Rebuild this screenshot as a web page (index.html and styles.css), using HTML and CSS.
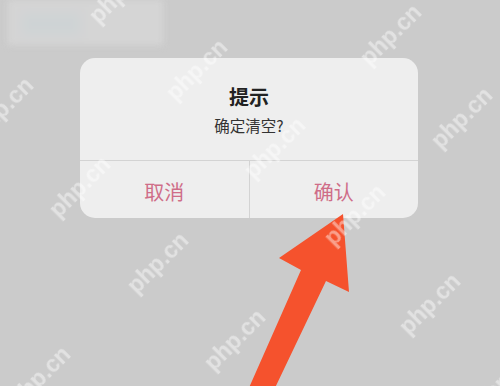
FILE: index.html
```html
<!DOCTYPE html>
<html lang="zh-CN">
<head>
<meta charset="utf-8">
<title>提示</title>
<link rel="stylesheet" href="styles.css">
</head>
<body>
<div class="page">
  <div class="blur-card"><div class="blur-blob"></div></div>
</div>

<div class="overlay">
  <div class="dialog">
    <div class="dialog-body">
      <div class="dialog-title">提示</div>
      <div class="dialog-msg">确定清空?</div>
    </div>
    <div class="dialog-actions">
      <div class="btn">取消</div>
      <div class="btn btn-right">确认</div>
    </div>
  </div>
</div>

<svg class="arrow" width="500" height="386" viewBox="0 0 500 386">
  <polygon points="343,214 349,292 326,281 274,390 248,390 301,270 279,258" fill="#f5522d"/>
</svg>

<div class="watermarks">
  <span class="wm" style="left:120px;top:-7px">php.cn</span>
  <span class="wm" style="left:197px;top:70px">php.cn</span>
  <span class="wm" style="left:275px;top:148px">php.cn</span>
  <span class="wm" style="left:355px;top:215px">php.cn</span>
  <span class="wm" style="left:430px;top:304px">php.cn</span>
  <span class="wm" style="left:505px;top:380px">php.cn</span>
  <span class="wm" style="left:3px;top:108px">php.cn</span>
  <span class="wm" style="left:80px;top:187px">php.cn</span>
  <span class="wm" style="left:158px;top:263px">php.cn</span>
  <span class="wm" style="left:235px;top:340px">php.cn</span>
  <span class="wm" style="left:312px;top:417px">php.cn</span>
  <span class="wm" style="left:40px;top:377px">php.cn</span>
  <span class="wm" style="left:391px;top:35px">php.cn</span>
  <span class="wm" style="left:462px;top:118px">php.cn</span>
</div>
</body>
</html>
```

FILE: styles.css
```css
html, body {
  margin: 0;
  padding: 0;
}
body {
  width: 500px;
  height: 386px;
  overflow: hidden;
  background: #cbcbcb;
  font-family: "Noto Sans CJK SC", "Noto Sans", sans-serif;
  position: relative;
}
.page {
  padding-left: 8px;
}
.blur-card {
  width: 155px;
  height: 45px;
  background: #d5d5d5;
  filter: blur(3px);
  padding: 13px 0 0 14px;
  box-sizing: border-box;
}
.blur-blob {
  width: 58px;
  height: 22px;
  background: #ced3d5;
  filter: blur(5px);
}
.overlay {
  position: absolute;
  left: 0;
  top: 0;
  width: 500px;
  height: 386px;
  padding: 58px 0 0 80px;
  box-sizing: border-box;
}
.dialog {
  width: 338px;
  height: 160px;
  background: #eeeeee;
  border-radius: 15px;
  display: flex;
  flex-direction: column;
  overflow: hidden;
}
.dialog-body {
  height: 103px;
  border-bottom: 1px solid #d3d3d3;
  box-sizing: border-box;
  padding-top: 27px;
  display: flex;
  flex-direction: column;
  align-items: center;
}
.dialog-title {
  font-size: 20px;
  line-height: 24px;
  font-weight: 700;
  color: #222222;
}
.dialog-msg {
  margin-top: 6px;
  font-size: 15.5px;
  line-height: 20px;
  color: #333333;
}
.dialog-actions {
  flex: 1;
  display: flex;
}
.btn {
  flex: 1;
  display: flex;
  align-items: center;
  justify-content: center;
  padding-top: 4px;
  font-size: 20px;
  line-height: 24px;
  color: #cf6d88;
}
.btn-right {
  border-left: 1px solid #d3d3d3;
}
.arrow {
  position: absolute;
  left: 0;
  top: 0;
}
.watermarks {
  position: absolute;
  left: 0;
  top: 0;
  width: 500px;
  height: 386px;
  overflow: hidden;
  pointer-events: none;
}
.wm {
  position: absolute;
  transform: translate(-50%, -50%) rotate(-45deg);
  font-family: "Liberation Sans", Arial, sans-serif;
  font-weight: 700;
  font-size: 23px;
  line-height: 23px;
  color: rgba(255, 255, 255, 0.45);
  white-space: nowrap;
  filter: blur(0.6px);
}
```
